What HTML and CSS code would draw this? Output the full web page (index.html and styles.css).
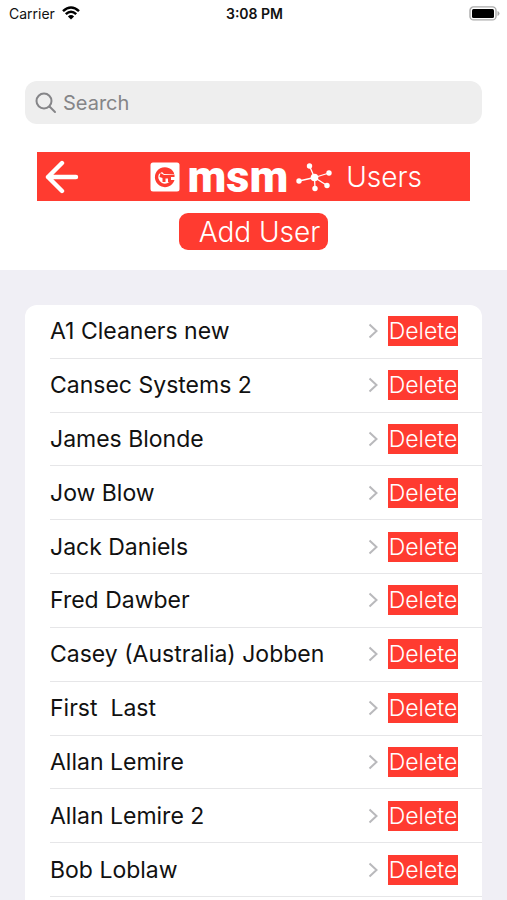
FILE: index.html
```html
<!DOCTYPE html>
<html lang="en">
<head>
<meta charset="utf-8">
<meta name="viewport" content="width=device-width, initial-scale=1">
<title>Users</title>
<link rel="stylesheet" href="styles.css">
</head>
<body>
<div class="status">
  <div class="carrier"><span>Carrier</span>
    <svg width="18" height="14" viewBox="0 0 18 14" fill="none" stroke="#000" stroke-width="2.5"><path d="M1 5.2Q9-2.2 17 5.2M3.8 8.2Q9 3.2 14.2 8.2"/><path d="M9 13.5L5.9 10.4Q9 7.6 12.1 10.4Z" fill="#000" stroke="none"/></svg>
  </div>
  <time class="clock">3:08 PM</time>
  <svg class="battery" width="31" height="15" viewBox="0 0 31 15"><rect x="1" y=".9" width="26" height="13" rx="3.5" fill="#fff" stroke="#aaa" stroke-width="1.4"/><rect x="3" y="3" width="22" height="9" rx="1.5"/><path d="M28.5 5q2 .6 2 2.5t-2 2.5z" fill="#aaa"/></svg>
</div>
<header class="top">
  <label class="search">
    <svg width="22" height="22" viewBox="0 0 22 22" fill="none" stroke="#858588" stroke-width="2" stroke-linecap="round"><circle cx="9" cy="9" r="7.5"/><path d="M14.5 14.5L20 20"/></svg>
    <input type="search" placeholder="Search" aria-label="Search">
  </label>
  <div class="banner">
    <button class="back" aria-label="Back">
      <svg width="34" height="34" viewBox="0 0 34 34" fill="none" stroke="#fff" stroke-width="4.4" stroke-linecap="round" stroke-linejoin="round"><path d="M17 3L3 17L17 31M3 17H31"/></svg>
    </button>
    <div class="brand">
      <svg width="30" height="30" viewBox="0 0 30 30"><rect x=".5" y=".5" width="29" height="29" rx="2.5" fill="#fff"/><path d="M24 11A10 10 0 1 0 24.500 18H21A6.500 6.500 0 1 1 9 12L12 10L14 12H24Z" fill="#ff3b30"/><path d="M10.500 11L14 13L24.500 12.500V15H21V20H18V16.500H15.500V20H12.500V16L9.500 15Z" fill="#ff3b30"/></svg>
      <span class="wordmark">msm</span>
      <svg width="36" height="30" viewBox="0 0 36 30" fill="#fff" stroke="#fff"><path d="M18.500 15.500L13.500 4M18.500 15.500L33 11M18.500 15.500L31 23.500M18.500 15.500L19 26.500M18.500 15.500L3 19" stroke-width="1.300"/><g stroke="none"><circle cx="18.500" cy="15.500" r="3.800"/><circle cx="13.500" cy="4" r="2.700"/><circle cx="33" cy="11" r="2.700"/><circle cx="31" cy="23.500" r="2.700"/><circle cx="19" cy="26.500" r="2.700"/><circle cx="3" cy="19" r="2.700"/></g></svg>
    </div>
    <h1>Users</h1>
  </div>
  <button class="add">Add User</button>
</header>
<main>
  <ul class="list">
    <li><a href="#">A1 Cleaners new<svg class="chev" viewBox="0 0 10 16"><path d="M1.500 1.500L8.500 8L1.500 14.500"/></svg></a><button>Delete</button></li>
    <li><a href="#">Cansec Systems 2<svg class="chev" viewBox="0 0 10 16"><path d="M1.500 1.500L8.500 8L1.500 14.500"/></svg></a><button>Delete</button></li>
    <li><a href="#">James Blonde<svg class="chev" viewBox="0 0 10 16"><path d="M1.500 1.500L8.500 8L1.500 14.500"/></svg></a><button>Delete</button></li>
    <li><a href="#">Jow Blow<svg class="chev" viewBox="0 0 10 16"><path d="M1.500 1.500L8.500 8L1.500 14.500"/></svg></a><button>Delete</button></li>
    <li><a href="#">Jack Daniels<svg class="chev" viewBox="0 0 10 16"><path d="M1.500 1.500L8.500 8L1.500 14.500"/></svg></a><button>Delete</button></li>
    <li><a href="#">Fred Dawber<svg class="chev" viewBox="0 0 10 16"><path d="M1.500 1.500L8.500 8L1.500 14.500"/></svg></a><button>Delete</button></li>
    <li><a href="#">Casey (Australia) Jobben<svg class="chev" viewBox="0 0 10 16"><path d="M1.500 1.500L8.500 8L1.500 14.500"/></svg></a><button>Delete</button></li>
    <li><a href="#">First  Last<svg class="chev" viewBox="0 0 10 16"><path d="M1.500 1.500L8.500 8L1.500 14.500"/></svg></a><button>Delete</button></li>
    <li><a href="#">Allan Lemire<svg class="chev" viewBox="0 0 10 16"><path d="M1.500 1.500L8.500 8L1.500 14.500"/></svg></a><button>Delete</button></li>
    <li><a href="#">Allan Lemire 2<svg class="chev" viewBox="0 0 10 16"><path d="M1.500 1.500L8.500 8L1.500 14.500"/></svg></a><button>Delete</button></li>
    <li><a href="#">Bob Loblaw<svg class="chev" viewBox="0 0 10 16"><path d="M1.500 1.500L8.500 8L1.500 14.500"/></svg></a><button>Delete</button></li>
  </ul>
</main>
</body>
</html>
```
FILE: styles.css
```css
* { box-sizing: border-box; }
body {
  margin: 0;
  min-height: 100vh;
  display: flex;
  flex-direction: column;
  background: #fff;
  color: #111;
  font-family: Inter, "Liberation Sans", sans-serif;
}
button {
  border: 0;
  padding: 0;
  background: #ff3b30;
  color: #fff;
  font: inherit;
}
svg { flex: none; }

.status {
  display: grid;
  grid-template-columns: 1fr auto 1fr;
  align-items: center;
  height: 26px;
  padding: 0 7px 0 9px;
  font-size: 14px;
}
.carrier { display: flex; align-items: center; gap: 7px; }
.clock { font-weight: 600; }
.battery { justify-self: end; }

.top {
  display: flex;
  flex-direction: column;
  align-items: center;
  padding: 55px 25px 20px;
}
.search {
  align-self: stretch;
  display: flex;
  align-items: center;
  gap: 6px;
  height: 43px;
  padding: 0 10px;
  border-radius: 12px;
  background: #eee;
}
.search input {
  flex: 1;
  min-width: 0;
  border: 0;
  padding: 0;
  background: none;
  font: inherit;
  font-size: 20px;
}
.search input::placeholder { color: #858588; opacity: 1; }

.banner {
  align-self: stretch;
  display: flex;
  align-items: center;
  height: 49px;
  margin: 28px 12px 12px;
  padding: 0 48px 0 8px;
  background: #ff3b30;
  color: #fff;
}
.back { display: flex; }
.brand {
  display: flex;
  align-items: center;
  gap: 8px;
  margin: 0 14px 0 auto;
}
.wordmark {
  font-family: Roboto, sans-serif;
  font-size: 45px;
  font-weight: 900;
  line-height: 40px;
}
h1 {
  margin: 0;
  font-size: 28px;
  font-weight: 300;
}
.add {
  height: 37px;
  padding: 0 8px 0 20px;
  border-radius: 9px;
  font-size: 28px;
  font-weight: 300;
}

main {
  flex: 1;
  display: flex;
  padding: 35px 25px 0;
  background: #f0eff5;
}
.list {
  flex: 1;
  display: grid;
  grid-auto-rows: 1fr;
  margin: 0;
  padding: 0 0 3px 25px;
  border-radius: 12px 12px 0 0;
  background: #fff;
  list-style: none;
}
.list li {
  display: flex;
  align-items: center;
  gap: 10px;
  padding-right: 24px;
  border-bottom: 1px solid #e6e6e8;
}
.list a {
  flex: 1;
  display: flex;
  align-items: center;
  justify-content: space-between;
  color: inherit;
  font-size: 23px;
  text-decoration: none;
  white-space: pre;
}
.chev {
  width: 10px;
  height: 16px;
  fill: none;
  stroke: #b9b9bc;
  stroke-width: 2;
}
.list button {
  width: 70px;
  height: 30px;
  font-size: 23px;
  font-weight: 300;
}
```
